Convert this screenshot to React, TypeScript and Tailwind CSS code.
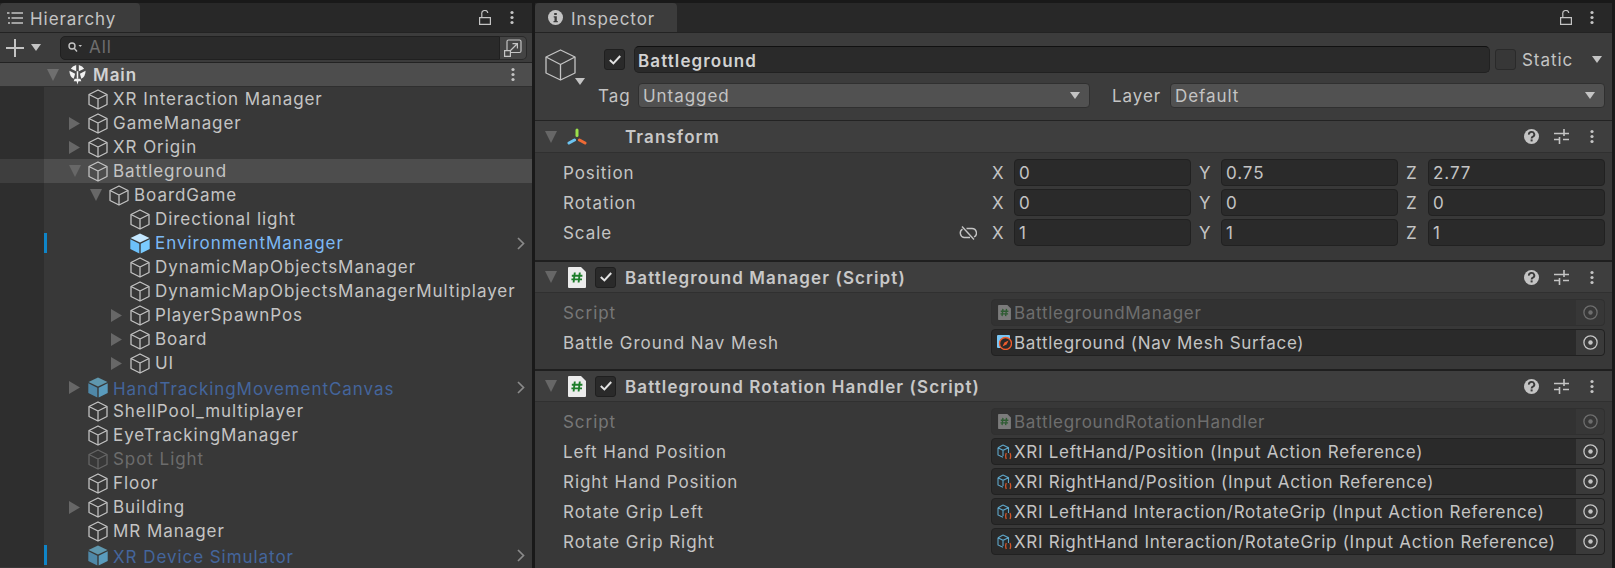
import type { ReactNode } from "react";

const FONT = "[font-family:Inter,'Noto_Sans',sans-serif] tracking-[0.95px]";

function Cube({ className = "stroke-[#c4c4c4]" }: { className?: string }) {
  return (
    <svg viewBox="0 0 20 21" className={`h-[21px] w-5 shrink-0 fill-none ${className}`} strokeWidth="1.25" strokeLinejoin="round">
      <path d="M10 1 L19 5.5 V15.5 L10 20 L1 15.5 V5.5 Z" />
      <path d="M1 5.5 L10 10 L19 5.5 M10 10 V20" />
    </svg>
  );
}

function PrefabCube({ top, left, right }: { top: string; left: string; right: string }) {
  return (
    <svg viewBox="0 0 20 21" className="h-[21px] w-5 shrink-0">
      <path d="M10 .5 L19.5 5 L10 9.5 L.5 5 Z" fill={top} />
      <path d="M.3 6.3 L9.3 10.7 V20.5 L.3 16 Z" fill={left} />
      <path d="M19.7 6.3 L10.7 10.7 V20.5 L19.7 16 Z" fill={right} />
    </svg>
  );
}

function UnityIcon() {
  return (
    <svg viewBox="0 0 20 22" className="h-[21px] w-[19px] shrink-0" fill="#f2f2f2">
      <path d="M8.6 1 V7.6 L3 5 Q4.5 2 8.6 1 Z" />
      <path d="M11.4 1 V7.6 L17 5 Q15.5 2 11.4 1 Z" />
      <path d="M1.5 7 L7.5 10.2 L6 15.5 Q1.5 13 1.5 7 Z" />
      <path d="M18.5 7 L12.5 10.2 L14 15.5 Q18.5 13 18.5 7 Z" />
      <path d="M9.2 7.5 H10.8 V15.5 H9.2 Z" />
      <path d="M7 15.5 H13 L14 18 H11 L10 21.5 L9 18 H6 Z" />
    </svg>
  );
}

function ArrowRight() {
  return (
    <svg viewBox="0 0 11 13" className="h-[13px] w-[11px]">
      <path d="M0 0 L11 6.5 L0 13 Z" fill="#676767" />
    </svg>
  );
}

function ArrowDown({ fill = "#676767" }: { fill?: string }) {
  return (
    <svg viewBox="0 0 12 12" className="h-3 w-3">
      <path d="M0 0 H12 L6 12 Z" fill={fill} />
    </svg>
  );
}

function Caret() {
  return (
    <svg viewBox="0 0 10 7" className="h-[7px] w-[10px] shrink-0">
      <path d="M0 0 H10 L5 7 Z" fill="#c4c4c4" />
    </svg>
  );
}

function Dots() {
  return (
    <svg viewBox="0 0 4 14" className="h-[15px] w-1 shrink-0">
      <circle cx="2" cy="2" r="1.6" fill="#c4c4c4" />
      <circle cx="2" cy="7" r="1.6" fill="#c4c4c4" />
      <circle cx="2" cy="12" r="1.6" fill="#c4c4c4" />
    </svg>
  );
}

function Lock() {
  return (
    <svg viewBox="0 0 12 15" className="h-[15px] w-3 shrink-0 fill-none stroke-[#c4c4c4]" strokeWidth="1.2">
      <path d="M.6 7.6 H11.4 V14.4 H.6 Z" />
      <path d="M2.8 7.5 V4 A3 3 0 0 1 8.8 3" />
    </svg>
  );
}

function ListIcon() {
  return (
    <svg viewBox="0 0 16 12" className="h-3 w-4 shrink-0 fill-none stroke-[#c4c4c4]" strokeWidth="1.3">
      <path d="M4.5 1 H16 M4.5 6 H16 M4.5 11 H16" />
      <path d="M0 1 H2.5 M1 6 H3 M1 11 H3" />
    </svg>
  );
}

function InfoIcon() {
  return (
    <svg viewBox="0 0 15 15" className="h-[15px] w-[15px] shrink-0">
      <circle cx="7.5" cy="7.5" r="7.5" fill="#c4c4c4" />
      <path d="M6.2 3 H8.8 V5 H6.2 Z M5.7 6.3 H8.8 V11 H9.8 V12.3 H5.5 V11 H6.5 V7.6 H5.7 Z" fill="#3c3c3c" />
    </svg>
  );
}

function HelpIcon() {
  return (
    <svg viewBox="0 0 15 15" className="h-[15px] w-[15px] shrink-0">
      <circle cx="7.5" cy="7.5" r="7.5" fill="#c4c4c4" />
      <path d="M4.9 5.6 A2.7 2.5 0 1 1 8.9 7.6 Q7.6 8.2 7.6 9.4" fill="none" stroke="#3c3c3c" strokeWidth="1.9" />
      <rect x="6.6" y="10.4" width="2" height="2" fill="#3c3c3c" />
    </svg>
  );
}

function SlidersIcon() {
  return (
    <svg viewBox="0 0 15 15" className="h-[15px] w-[15px] shrink-0 fill-none stroke-[#c4c4c4]" strokeWidth="1.3">
      <path d="M0 4.5 H15 M0 10.5 H6 M9 10.5 H15" />
      <path d="M10 0 V7 M5.5 8 V15" strokeWidth="1.6" />
    </svg>
  );
}

function HeaderIcons() {
  return (
    <div className="flex items-center">
      <HelpIcon />
      <div className="ml-[15px]">
        <SlidersIcon />
      </div>
      <div className="ml-[21px] mr-[18px] flex">
        <Dots />
      </div>
    </div>
  );
}

function Check() {
  return (
    <div className="flex h-[21px] w-[21px] shrink-0 items-center justify-center rounded-[3px] border border-[#1f1f1f] bg-[#2a2a2a]">
      <svg viewBox="0 0 12 10" className="h-[10px] w-3 fill-none stroke-[#e2e2e2]" strokeWidth="2">
        <path d="M.8 5 L4.4 8.4 L11.2 1" />
      </svg>
    </div>
  );
}

function ScriptIcon({ dim = false }: { dim?: boolean }) {
  return (
    <svg viewBox="0 0 18 21" className={dim ? "mx-[1px] h-[15px] w-[13px] shrink-0" : "h-[21px] w-[18px] shrink-0"}>
      <path d="M0 1 Q0 0 1 0 H13 L18 5 V20 Q18 21 17 21 H1 Q0 21 0 20 Z" fill={dim ? "#7b7b7b" : "#ececec"} />
      <path d="M6.8 5.5 L5.6 15.5 M11.8 5.5 L10.6 15.5 M3.8 8.7 H14.4 M3.4 12.4 H14" fill="none" stroke={dim ? "#2f5c33" : "#1d7d2a"} strokeWidth="1.9" />
    </svg>
  );
}

function NavIcon() {
  return (
    <svg viewBox="0 0 15 15" className="h-[15px] w-[15px] shrink-0">
      <rect x="0" y="0" width="13" height="13" rx="1" fill="#79c6f5" />
      <circle cx="8.5" cy="8.5" r="6" fill="#2a2a2a" stroke="#ee5c2d" strokeWidth="1.4" />
      <path d="M11.5 5.5 L9.6 9.6 L5.5 11.5 L7.4 7.4 Z" fill="#ee5c2d" />
    </svg>
  );
}

function ActionIcon() {
  return (
    <svg viewBox="0 0 15 16" className="h-4 w-[15px] shrink-0 fill-none">
      <path d="M6 1 L11.5 3.7 V9 M1 3.7 L6 1 M1 3.7 V11 L6 13.3 M1 3.7 L6 6.3 L11.5 3.7 M6 6.3 V12" stroke="#5da5c8" strokeWidth="1.1" />
      <path d="M9.3 9 Q8 12 9.3 15 M13 9 Q14.3 12 13 15" stroke="#d2562c" strokeWidth="1.3" />
    </svg>
  );
}

function Target({ dim = false }: { dim?: boolean }) {
  const c = dim ? "#6d6d6d" : "#c4c4c4";
  return (
    <div className={`flex w-7 shrink-0 items-center justify-center self-stretch rounded-r-[3px] ${dim ? "bg-[#373737]" : "bg-[#3a3a3a]"}`}>
      <svg viewBox="0 0 15 15" className="h-[15px] w-[15px]">
        <circle cx="7.5" cy="7.5" r="6.6" fill="none" stroke={c} strokeWidth="1.3" />
        <circle cx="7.5" cy="7.5" r="2.2" fill={c} />
      </svg>
    </div>
  );
}

function UnlinkIcon() {
  return (
    <svg viewBox="0 0 18 14" className="h-[14px] w-[18px] shrink-0 fill-none stroke-[#c4c4c4]" strokeWidth="1.4">
      <path d="M7.5 2.5 H13 A4.5 4.5 0 0 1 15 11" />
      <path d="M3.5 3.2 A4.5 4.5 0 0 0 5 11.5 H11" />
      <path d="M3 .5 L15 13.5" />
    </svg>
  );
}

function AxisIcon() {
  return (
    <svg viewBox="0 0 20 17" className="h-[17px] w-5 shrink-0 fill-none" strokeWidth="3" strokeLinecap="round">
      <path d="M10 2 V7.5" stroke="#9be04a" />
      <path d="M2 15 L7.5 12" stroke="#6cc4f2" />
      <path d="M18 15 L12.5 12" stroke="#ee6a35" />
    </svg>
  );
}

type Kind = "plain" | "prefab" | "prefabDim" | "off";

type Row = {
  name: string;
  depth: number;
  arrow?: "right" | "down";
  kind?: Kind;
  bar?: boolean;
  selected?: boolean;
  chevron?: boolean;
  low?: boolean;
};

const ROWS: Row[] = [
  { name: "XR Interaction Manager", depth: 0 },
  { name: "GameManager", depth: 0, arrow: "right" },
  { name: "XR Origin", depth: 0, arrow: "right" },
  { name: "Battleground", depth: 0, arrow: "down", selected: true },
  { name: "BoardGame", depth: 1, arrow: "down" },
  { name: "Directional light", depth: 2 },
  { name: "EnvironmentManager", depth: 2, kind: "prefab", bar: true, chevron: true },
  { name: "DynamicMapObjectsManager", depth: 2 },
  { name: "DynamicMapObjectsManagerMultiplayer", depth: 2 },
  { name: "PlayerSpawnPos", depth: 2, arrow: "right" },
  { name: "Board", depth: 2, arrow: "right" },
  { name: "UI", depth: 2, arrow: "right" },
  { name: "HandTrackingMovementCanvas", depth: 0, arrow: "right", kind: "prefabDim", chevron: true, low: true },
  { name: "ShellPool_multiplayer", depth: 0 },
  { name: "EyeTrackingManager", depth: 0 },
  { name: "Spot Light", depth: 0, kind: "off" },
  { name: "Floor", depth: 0 },
  { name: "Building", depth: 0, arrow: "right" },
  { name: "MR Manager", depth: 0 },
  { name: "XR Device Simulator", depth: 0, kind: "prefabDim", bar: true, chevron: true, low: true },
];

const INDENT = ["pl-[22px]", "pl-[43px]", "pl-[64px]"];

const TEXT_COLOR: Record<Kind, string> = {
  plain: "text-[#c4c4c4]",
  prefab: "text-[#7cb8f5]",
  prefabDim: "text-[#44659c]",
  off: "text-[#6c6c6c]",
};

function TreeRow({ row }: { row: Row }) {
  const kind = row.kind ?? "plain";
  return (
    <div className={`flex h-6 ${row.selected ? "bg-[#4d4d4d]" : ""}`}>
      <div className={`w-[44px] shrink-0 ${row.selected ? "bg-[#3e3e3e]" : "bg-[#2e2e2e]"}`} />
      <div className="flex min-w-0 flex-1 items-center">
        <div className={`h-5 w-[3px] shrink-0 ${row.bar ? "bg-[#0f85c8]" : ""}`} />
        <div className={`flex flex-1 items-center ${INDENT[row.depth]}`}>
          <div className="flex w-[19px] shrink-0 items-center">
            {row.arrow === "right" && <ArrowRight />}
            {row.arrow === "down" && <ArrowDown />}
          </div>
          {kind === "plain" && <Cube />}
          {kind === "off" && <Cube className="stroke-[#666666]" />}
          {kind === "prefab" && <PrefabCube top="#c3e7ff" left="#6cc0fa" right="#7acbff" />}
          {kind === "prefabDim" && <PrefabCube top="#5f97ae" left="#4f88a8" right="#5a9bbd" />}
          <span className={`ml-[5px] whitespace-nowrap text-[17px] leading-none ${row.low ? "pt-[4px]" : "pt-[1px]"} ${TEXT_COLOR[kind]}`}>
            {row.name}
          </span>
        </div>
        {row.chevron && (
          <svg viewBox="0 0 8 13" className="mr-[7px] h-[13px] w-2 shrink-0 fill-none stroke-[#8a8a8a]" strokeWidth="1.7">
            <path d="M1 1 L6.5 6.5 L1 12" />
          </svg>
        )}
      </div>
    </div>
  );
}

function Tab({ width, children }: { width: string; children: ReactNode }) {
  return (
    <div className={`flex h-[29px] items-center rounded-t-[4px] bg-[#3c3c3c] text-[17px] leading-none text-[#c4c4c4] ${width}`}>{children}</div>
  );
}

function HierarchyPanel() {
  return (
    <div className="flex w-[532px] shrink-0 flex-col">
      <div className="flex h-[29px] items-center justify-between bg-[#282828]">
        <Tab width="w-[140px]">
          <div className="ml-[7px] mr-[7px]">
            <ListIcon />
          </div>
          <span className="pt-[3px]">Hierarchy</span>
        </Tab>
        <div className="flex items-center">
          <Lock />
          <div className="ml-[19px] mr-[18px] flex">
            <Dots />
          </div>
        </div>
      </div>
      <div className="flex h-[31px] items-center border-y border-[#232323] bg-[#3c3c3c] pl-[6px] pr-[5px]">
        <svg viewBox="0 0 18 18" className="h-[18px] w-[18px] shrink-0 stroke-[#c4c4c4]" strokeWidth="2">
          <path d="M9 0 V18 M0 9 H18" />
        </svg>
        <div className="ml-[7px] mr-[19px]">
          <Caret />
        </div>
        <div className="flex h-[24px] flex-1 items-center rounded-l-[5px] border border-[#202020] bg-[#2a2a2a] pl-[7px]">
          <svg viewBox="0 0 14 11" className="h-[11px] w-[14px] shrink-0 fill-none stroke-[#c4c4c4]" strokeWidth="1.4">
            <circle cx="4" cy="4" r="3" />
            <path d="M6 6 L9 9.5" />
            <path d="M10.5 3 H14 L12.2 5 Z" fill="#c4c4c4" stroke="none" />
          </svg>
          <span className="ml-[7px] text-[17px] leading-none text-[#6e6e6e]">All</span>
        </div>
        <div className="flex h-[24px] w-[27px] shrink-0 items-center justify-center rounded-r-[5px] border border-l-0 border-[#2a2a2a] bg-[#444444]">
          <svg viewBox="0 0 18 18" className="h-[18px] w-[18px] fill-none stroke-[#c4c4c4]" strokeWidth="1.2">
            <path d="M3 11 V2.5 Q3 1 4.5 1 H15.5 Q17 1 17 2.5 V12 Q17 13.5 15.5 13.5 H7" />
            <path d="M.6 11.6 H6.4 V17.4 H.6 Z" />
            <path d="M6 12 L13 5 M8.5 4.6 H13.4 V9.5" />
          </svg>
        </div>
      </div>
      <div className="flex-1 overflow-hidden bg-[#383838]">
        <div className="flex h-6 items-center border-b border-[#2f2f2f] bg-[#4d4d4d] pl-[47px] pr-[17px]">
          <ArrowDown fill="#6f6f6f" />
          <div className="ml-[9px]">
            <UnityIcon />
          </div>
          <span className="ml-[6px] flex-1 pt-[1px] text-[17px] font-semibold leading-none text-[#d2d2d2]">Main</span>
          <Dots />
        </div>
        {ROWS.map((row) => (
          <TreeRow key={row.name} row={row} />
        ))}
      </div>
    </div>
  );
}

function Field({ children, dim = false }: { children: ReactNode; dim?: boolean }) {
  return (
    <div
      className={`flex h-[27px] min-w-0 flex-1 items-center overflow-hidden rounded-[4px] border text-[17px] ${
        dim ? "border-[#303030] bg-[#323232] text-[#6e6e6e]" : "border-[#212121] bg-[#2a2a2a] text-[#c4c4c4]"
      }`}
    >
      {children}
    </div>
  );
}

function Vector({ label, x, y, z, unlink }: { label: string; x: string; y: string; z: string; unlink?: boolean }) {
  return (
    <div className="flex items-center pl-[28px] pr-[7px]">
      <span className="flex-1 pt-[2px] text-[17px] leading-none text-[#c4c4c4]">{label}</span>
      {unlink && (
        <div className="mr-[15px]">
          <UnlinkIcon />
        </div>
      )}
      <div className="grid w-[613px] grid-cols-3 gap-2">
        {[
          ["X", x],
          ["Y", y],
          ["Z", z],
        ].map(([axis, value]) => (
          <div key={axis} className="flex items-center">
            <span className="w-[22px] shrink-0 pt-[2px] text-[17px] leading-none text-[#c4c4c4]">{axis}</span>
            <Field>
              <span className="pl-[4px] pt-[2px] leading-none">{value}</span>
            </Field>
          </div>
        ))}
      </div>
    </div>
  );
}

function Ref({ label, icon, value, dim = false }: { label: string; icon: ReactNode; value: string; dim?: boolean }) {
  return (
    <div className="flex items-center pl-[28px] pr-[7px]">
      <span className={`flex-1 pt-[2px] text-[17px] leading-none ${dim ? "text-[#777777]" : "text-[#c4c4c4]"}`}>{label}</span>
      <div className="flex w-[614px]">
        <Field dim={dim}>
          <div className="flex min-w-0 flex-1 items-center pl-[5px]">
            {icon}
            <span className="ml-[2px] whitespace-nowrap pt-[2px] leading-none tracking-[0.72px]">{value}</span>
          </div>
          <Target dim={dim} />
        </Field>
      </div>
    </div>
  );
}

function ComponentHeader({ title }: { title: string }) {
  return (
    <div className="flex h-[31px] items-center border-b border-[#303030] bg-[#3e3e3e] pl-[10px]">
      <ArrowDown />
      <div className="ml-[11px]">
        <ScriptIcon />
      </div>
      <div className="ml-[9px]">
        <Check />
      </div>
      <span className="ml-[9px] flex-1 pt-[2px] text-[17px] font-semibold leading-none tracking-[1.1px] text-[#c8c8c8]">{title}</span>
      <HeaderIcons />
    </div>
  );
}

function InspectorPanel() {
  return (
    <div className="flex flex-1 flex-col">
      <div className="flex h-[29px] items-center justify-between bg-[#282828]">
        <Tab width="w-[142px]">
          <div className="ml-[13px] mr-[8px]">
            <InfoIcon />
          </div>
          <span className="pt-[3px]">Inspector</span>
        </Tab>
        <div className="flex items-center">
          <Lock />
          <div className="ml-[18px] mr-[18px] flex">
            <Dots />
          </div>
        </div>
      </div>
      <div className="flex-1 bg-[#383838]">
        <div className="flex border-y border-[#232323] bg-[#3c3c3c] pb-[12px] pl-[10px] pr-[7px] pt-[13px]">
          <div className="relative w-[53px] shrink-0 pt-[3px]">
            <svg viewBox="0 0 31 32" className="h-8 w-[31px] fill-none stroke-[#c4c4c4]" strokeWidth="1.3" strokeLinejoin="round">
              <path d="M15.5 1 L30 8 V24 L15.5 31 L1 24 V8 Z" />
              <path d="M1 8 L15.5 15.5 L30 8 M15.5 15.5 V31" />
            </svg>
            <div className="absolute left-[30px] top-[32px]">
              <Caret />
            </div>
          </div>
          <div className="flex min-w-0 flex-1 flex-col gap-[10px]">
            <div className="flex h-[27px] items-center pl-[6px] pr-[3px]">
              <Check />
              <div className="ml-[9px] flex h-[27px] flex-1 items-center rounded-[5px] border border-[#212121] border-t-[#111111] bg-[#2a2a2a] pl-[3px] text-[17px] font-semibold leading-none tracking-[1.1px] text-[#d2d2d2]">
                <span className="pt-[3px]">Battleground</span>
              </div>
              <div className="ml-[5px] h-[21px] w-[21px] shrink-0 rounded-[3px] border border-[#2a2a2a] bg-[#373737]" />
              <span className="ml-[6px] w-[70px] shrink-0 pt-[2px] text-[17px] leading-none text-[#c4c4c4]">Static</span>
              <Caret />
            </div>
            <div className="flex h-[25px] items-center text-[17px] leading-none text-[#c4c4c4]">
              <span className="w-[40px] shrink-0 pt-[2px]">Tag</span>
              <div className="flex h-[25px] w-[452px] shrink-0 items-center justify-between rounded-[4px] border border-[#303030] bg-[#515151] pl-[4px] pr-[9px]">
                <span className="pt-[2px]">Untagged</span>
                <Caret />
              </div>
              <span className="ml-[22px] w-[58px] shrink-0 pt-[2px]">Layer</span>
              <div className="flex h-[25px] flex-1 items-center justify-between rounded-[4px] border border-[#303030] bg-[#515151] pl-[4px] pr-[9px]">
                <span className="pt-[2px]">Default</span>
                <Caret />
              </div>
            </div>
          </div>
        </div>
        <div className="flex h-[32px] items-center border-b border-[#303030] bg-[#3e3e3e] pl-[10px]">
          <ArrowDown />
          <div className="ml-[10px]">
            <AxisIcon />
          </div>
          <span className="ml-[38px] flex-1 pt-[2px] text-[17px] font-semibold leading-none tracking-[1.1px] text-[#c8c8c8]">Transform</span>
          <HeaderIcons />
        </div>
        <div className="flex flex-col gap-[3px] pb-[14px] pt-[6px]">
          <Vector label="Position" x="0" y="0.75" z="2.77" />
          <Vector label="Rotation" x="0" y="0" z="0" />
          <Vector label="Scale" x="1" y="1" z="1" unlink />
        </div>
        <div className="h-[2px] bg-[#1f1f1f]" />
        <ComponentHeader title="Battleground Manager (Script)" />
        <div className="flex flex-col gap-[3px] pb-[13px] pt-[6px]">
          <Ref label="Script" dim icon={<ScriptIcon dim />} value="BattlegroundManager" />
          <Ref label="Battle Ground Nav Mesh" icon={<NavIcon />} value="Battleground (Nav Mesh Surface)" />
        </div>
        <div className="h-[2px] bg-[#1f1f1f]" />
        <ComponentHeader title="Battleground Rotation Handler (Script)" />
        <div className="flex flex-col gap-[3px] pt-[6px]">
          <Ref label="Script" dim icon={<ScriptIcon dim />} value="BattlegroundRotationHandler" />
          <Ref label="Left Hand Position" icon={<ActionIcon />} value="XRI LeftHand/Position (Input Action Reference)" />
          <Ref label="Right Hand Position" icon={<ActionIcon />} value="XRI RightHand/Position (Input Action Reference)" />
          <Ref label="Rotate Grip Left" icon={<ActionIcon />} value="XRI LeftHand Interaction/RotateGrip (Input Action Reference)" />
          <Ref label="Rotate Grip Right" icon={<ActionIcon />} value="XRI RightHand Interaction/RotateGrip (Input Action Reference)" />
        </div>
      </div>
    </div>
  );
}

export default function App() {
  return (
    <div className={`flex h-[568px] w-[1615px] gap-[3px] overflow-hidden bg-[#191919] pr-[3px] pt-[3px] ${FONT}`}>
      <HierarchyPanel />
      <InspectorPanel />
    </div>
  );
}
